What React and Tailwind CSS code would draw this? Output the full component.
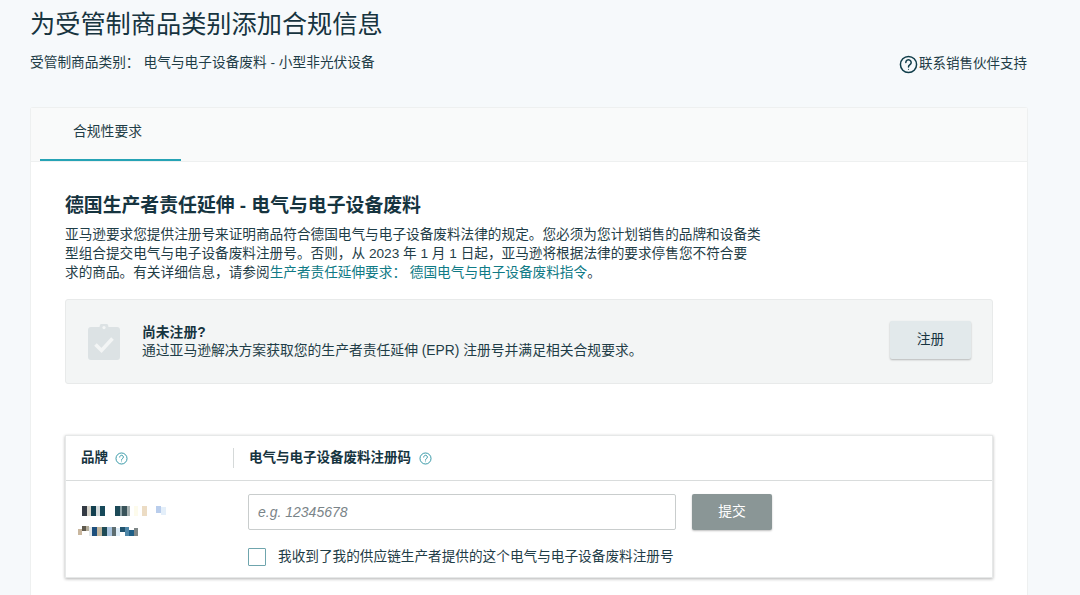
import React from "react";

const cjk = "font-['Liberation_Sans','Noto_Sans_CJK_SC',sans-serif]";

// Small help icon used in the table header
function HelpIcon({ className, strokeWidth = 1.5 }) {
  return (
    <svg viewBox="0 0 24 24" fill="none" stroke="currentColor" strokeWidth={strokeWidth} className={className}>
      <circle cx="12" cy="12" r="10.2" />
      <path d="M8.6 9.4a3.4 3.4 0 1 1 5.3 2.8c-1.2.8-1.9 1.4-1.9 2.8" strokeLinecap="round" />
      <circle cx="12" cy="18" r="0.7" fill="currentColor" stroke="none" />
    </svg>
  );
}

function ClipboardIcon() {
  return (
    <svg viewBox="0 0 32 36" className="w-[32px] h-[36px]">
      <path
        d="M3 3h8.5a4.5 4.5 0 0 1 9 0H29a3 3 0 0 1 3 3v27a3 3 0 0 1-3 3H3a3 3 0 0 1-3-3V6a3 3 0 0 1 3-3z"
        fill="#dce2e4"
      />
      <circle cx="16" cy="3.6" r="1.6" fill="#f3f5f5" />
      <path d="M7.5 20.5l6 6L24.5 14.5" fill="none" stroke="#f3f5f5" strokeWidth="3.6" />
    </svg>
  );
}

// Pixelated (blurred out) brand name, coordinates in px from the top left of the block
const mosaic = [
  [4, 2, 5, 10, "#343a44"], [9, 2, 4, 10, "#d9d6cc"], [13, 2, 5, 10, "#123f4f"],
  [18, 2, 4, 10, "#d5dcdd"], [22, 2, 5, 10, "#17495a"], [37, 2, 5, 10, "#1c4a58"], [42, 2, 2, 10, "#8fa3a8"],
  [44, 2, 5, 10, "#39535a"], [49, 2, 3, 10, "#a9b3b3"], [56, 2, 4, 10, "#fdfbec"], [64, 2, 5, 10, "#ecdcc4"],
  [78, 2, 5, 7, "#b9cdec"], [83, 3, 5, 8, "#e4effa"],
  [0, 25, 4, 6, "#c9b79f"], [4, 22, 4, 5, "#5f5a4e"], [8, 22, 3, 5, "#b5ae9c"],
  [11, 23, 3, 9, "#e3e8ea"], [14, 23, 5, 9, "#1d4f7c"], [19, 23, 5, 9, "#c2b69d"], [24, 23, 5, 9, "#1d4a56"],
  [29, 23, 5, 9, "#a9c4de"], [34, 23, 4, 9, "#5d6d70"], [38, 24, 4, 8, "#dcecf7"],
  [42, 23, 5, 5, "#21546f"], [47, 23, 4, 9, "#4f87a8"], [51, 26, 5, 6, "#1f5f86"], [56, 24, 4, 8, "#7f8787"],
];

function BrandMosaic() {
  return (
    <svg viewBox="0 0 90 35" className="w-[90px] h-[35px]" shapeRendering="crispEdges">
      {mosaic.map(([x, y, w, h, c], i) => (
        <rect key={i} x={x} y={y} width={w} height={h} fill={c} />
      ))}
    </svg>
  );
}

export default function App() {
  return (
    <div className={`h-screen overflow-hidden bg-[#f6f9fb] text-[#1f3d47] ${cjk}`}>
      {/* Header */}
      <div className="pl-[30px] pr-[53px]">
        <h1 className="pt-[8px] text-[25.2px] leading-[32px] text-[#16343f]">为受管制商品类别添加合规信息</h1>
        <div className="flex justify-between items-center h-[44px] mt-[2px]">
          <div className="text-[13.7px] leading-[20px] -mt-[2px] whitespace-nowrap">
            <span>受管制商品类别：</span>
            <span className="ml-[4px]">电气与电子设备废料 - 小型非光伏设备</span>
          </div>
          <div className="flex items-center text-[13.5px] mt-[1px]">
            <HelpIcon className="w-[19px] h-[19px] text-[#0f3d49]" strokeWidth={1.9} />
            <span className="ml-[1px]">联系销售伙伴支持</span>
          </div>
        </div>
      </div>

      {/* Card */}
      <div className="mt-[21px] ml-[30px] mr-[52px] pb-[40px] bg-white rounded-t-[3px] border-t border-x border-[#eef0f0]">
        <div className="h-[54px] bg-[#f9fafa] border-b border-[#eef0f0] pl-[9px]">
          <div className="w-[141px] h-[53px] border-b-[2px] border-[#26a3b5] flex items-center justify-center pr-[6px]">
            <span className="text-[13.8px] -mt-[3px]">合规性要求</span>
          </div>
        </div>

        <div className="px-[34px]">
          <h2 className="mt-[31px] text-[18.85px] leading-[26px] font-bold text-[#16343f]">
            德国生产者责任延伸 - 电气与电子设备废料
          </h2>
          <p className="mt-[6px] text-[13.65px] leading-[19px] whitespace-nowrap">
            亚马逊要求您提供注册号来证明商品符合德国电气与电子设备废料法律的规定。您必须为您计划销售的品牌和设备类
            <br />
            型组合提交电气与电子设备废料注册号。否则，从 2023 年 1 月 1 日起，亚马逊将根据法律的要求停售您不符合要
            <br />
            求的商品。有关详细信息，请参阅
            <span className="text-[#0f7a85]">生产者责任延伸要求： 德国电气与电子设备废料指令</span>。
          </p>

          {/* Notice */}
          <div className="mt-[17px] h-[85px] bg-[#f3f5f5] border border-[#e8eaea] rounded-[3px] flex items-center pl-[22px] pr-[21px]">
            <ClipboardIcon />
            <div className="ml-[22px] flex-1 text-[13.8px] leading-[18px]">
              <div className="font-bold text-[#16343f]">尚未注册?</div>
              <div>通过亚马逊解决方案获取您的生产者责任延伸 (EPR) 注册号并满足相关合规要求。</div>
            </div>
            <button className="w-[81px] h-[38px] -mt-[3px] bg-[#e2e9eb] rounded-[2px] shadow-[0_1px_2px_rgba(0,0,0,0.25)] text-[13.8px] text-[#16343f]">
              注册
            </button>
          </div>

          {/* Registration table */}
          <div className="mt-[51px] h-[143px] bg-white border border-[#e6e8e8] shadow-[0_1px_3px_rgba(0,0,0,0.3)]">
            <div className="h-[45px] border-b border-[#d9dcdc] flex items-center text-[13.5px] font-bold text-[#16343f]">
              <div className="w-[167px] pl-[15px] flex items-center">
                品牌
                <HelpIcon className="ml-[7px] w-[13px] h-[13px] text-[#1b8a9a]" strokeWidth={1.6} />
              </div>
              <div className="h-[20px] border-l border-[#d5d9d9] pl-[15px] flex items-center">
                电气与电子设备废料注册码
                <HelpIcon className="ml-[8px] w-[13px] h-[13px] text-[#1b8a9a]" strokeWidth={1.6} />
              </div>
            </div>
            <div className="flex">
              <div className="w-[182px] pl-[12px] pt-[23px]">
                <BrandMosaic />
              </div>
              <div className="pt-[13px]">
                <div className="flex">
                  <input
                    readOnly
                    placeholder="e.g. 12345678"
                    className="w-[428px] h-[36px] px-[9px] bg-white border border-[#c9cdcd] rounded-[2px] text-[14px] italic placeholder:text-[#7a8488] font-['Liberation_Sans',sans-serif]"
                  />
                  <button className="ml-[16px] w-[80px] h-[36px] bg-[#8a9696] rounded-[2px] shadow-[0_1px_2px_rgba(0,0,0,0.25)] text-[13.8px] text-white">
                    提交
                  </button>
                </div>
                <div className="mt-[17px] flex items-center">
                  <span className="w-[18px] h-[18px] bg-white border border-[#6fa5ad] rounded-[1px]" />
                  <span className="ml-[12px] text-[13.65px]">我收到了我的供应链生产者提供的这个电气与电子设备废料注册号</span>
                </div>
              </div>
            </div>
          </div>
        </div>
      </div>
    </div>
  );
}
